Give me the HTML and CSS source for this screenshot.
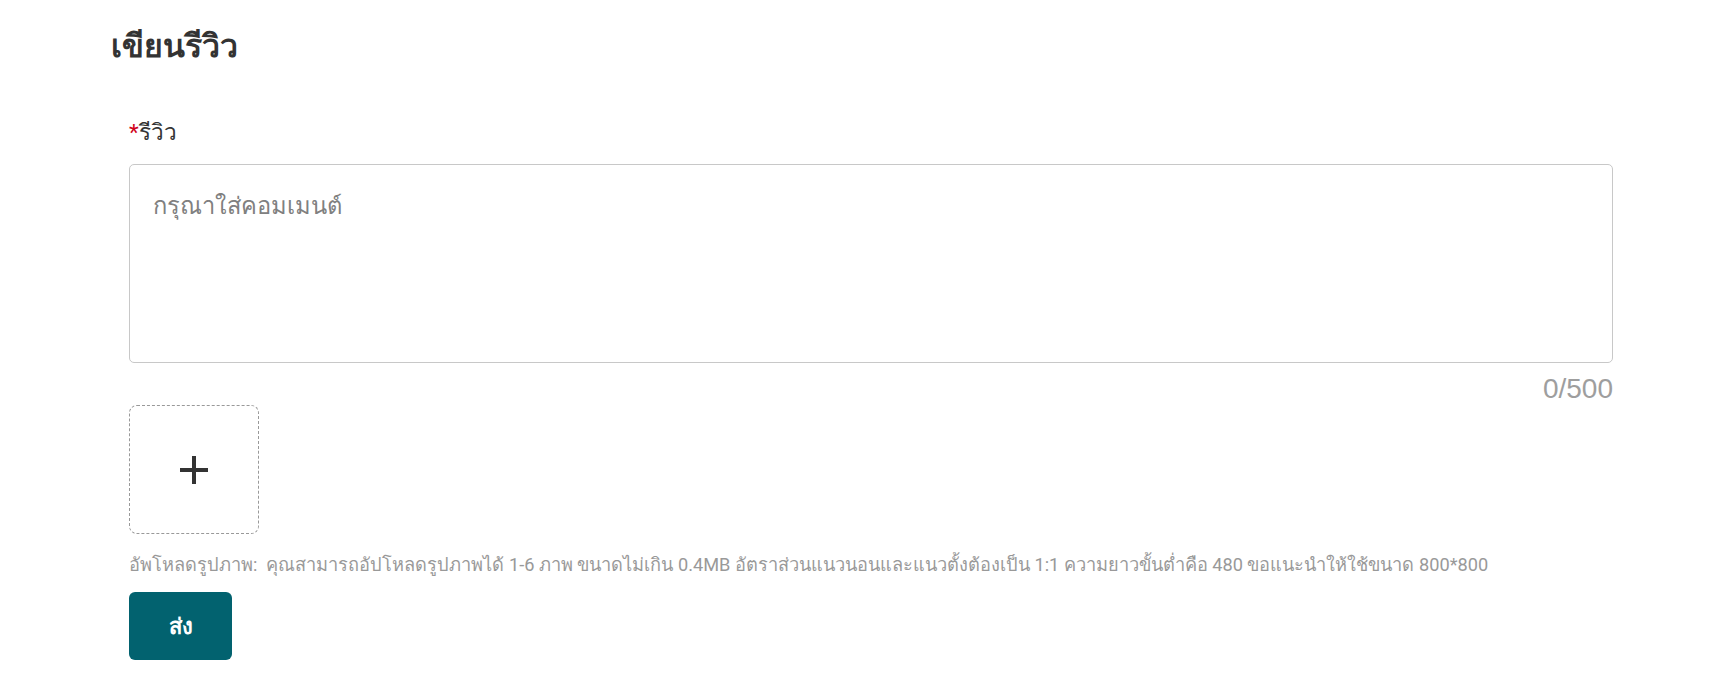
FILE: index.html
```html
<!DOCTYPE html>
<html lang="th">
<head>
<meta charset="utf-8">
<title>เขียนรีวิว</title>
<link rel="stylesheet" href="styles.css">
</head>
<body>
<div class="page">
  <h1 class="title">เขียนรีวิว</h1>
  <form class="form">
    <label class="label" for="review"><span class="req">*</span>รีวิว</label>
    <textarea id="review" class="textarea" placeholder="กรุณาใส่คอมเมนต์"></textarea>
    <div class="counter">0/500</div>
    <div class="upload">
      <svg class="plus" width="28" height="28" viewBox="0 0 28 28"><path d="M14 0V28M0 14H28" stroke="#333" stroke-width="4" fill="none"/></svg>
    </div>
    <p class="hint">อัพโหลดรูปภาพ:&nbsp; คุณสามารถอัปโหลดรูปภาพได้ 1-6 ภาพ ขนาดไม่เกิน 0.4MB อัตราส่วนแนวนอนและแนวตั้งต้องเป็น 1:1 ความยาวขั้นต่ำคือ 480 ขอแนะนำให้ใช้ขนาด 800*800</p>
    <button type="button" class="submit">ส่ง</button>
  </form>
</div>
</body>
</html>
```
FILE: styles.css
```css
html, body {
  margin: 0;
  background: #fff;
}
body {
  font-family: Roboto, "Noto Sans", "Liberation Sans", sans-serif;
  color: #333;
}
.page {
  padding: 0 114px 0 111px;
}
.title {
  margin: 26px 0 0;
  font-size: 32px;
  line-height: 40px;
  font-weight: 700;
  color: #333;
}
.form {
  padding-left: 18px;
  display: flex;
  flex-direction: column;
  align-items: flex-start;
}
.label {
  margin-top: 52px;
  font-size: 22.5px;
  line-height: 28px;
  color: #333;
}
.req {
  color: #d0021b;
}
.textarea {
  box-sizing: border-box;
  margin-top: 18px;
  width: 100%;
  height: 199px;
  border: 1px solid #c8c8c8;
  border-radius: 5px;
  padding: 25px 23px;
  font-family: Roboto, "Noto Sans", sans-serif;
  font-size: 23.7px;
  line-height: 32px;
  color: #333;
  resize: none;
  outline: none;
}
.textarea::placeholder {
  color: #808080;
}
.counter {
  align-self: flex-end;
  margin-top: 11px;
  font-family: "Liberation Sans", Arial, sans-serif;
  font-size: 28px;
  line-height: 30px;
  color: #9e9e9e;
}
.upload {
  box-sizing: border-box;
  margin-top: 1px;
  width: 130px;
  height: 129px;
  border: 1px dashed #999;
  border-radius: 8px;
  display: flex;
  align-items: center;
  justify-content: center;
}
.hint {
  margin: 19px 0 0;
  font-size: 18.2px;
  line-height: 24px;
  color: #999;
  white-space: nowrap;
}
.submit {
  margin-top: 15px;
  width: 103px;
  height: 68px;
  border: 0;
  border-radius: 6px;
  background: #02626f;
  color: #fff;
  font-family: Roboto, "Noto Sans", sans-serif;
  font-size: 22px;
  font-weight: 700;
  cursor: pointer;
}
```
